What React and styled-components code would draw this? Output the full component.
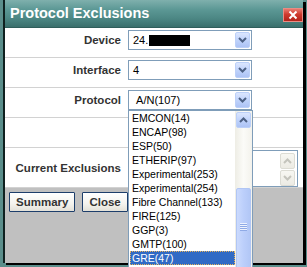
import styled, { createGlobalStyle } from 'styled-components'

const Global = createGlobalStyle`
  html, body {
    margin: 0;
    padding: 0;
    width: 307px;
    height: 267px;
    overflow: hidden;
    background: #5b8e8b;
  }
  body {
    font-family: 'Liberation Sans', Arial, sans-serif;
  }
  * { box-sizing: border-box; }
`

const Window = styled.div`
  position: relative;
  margin-left: 3px;
  width: 300px;
  height: 263px;
  display: flex;
  flex-direction: column;
  border-left: 2px solid #0f2120;
  box-shadow: 3px 2px 0 #000;
`

const TitleBar = styled.div`
  height: 28px;
  display: flex;
  align-items: flex-start;
  justify-content: space-between;
  padding-left: 5px;
  background: linear-gradient(#7fb0ad 0%, #5c9895 35%, #4b8683 70%, #3a6f6c 100%);
  border-bottom: 1px solid #2f5e5b;
`

const Title = styled.div`
  margin-top: 5px;
  color: #fff;
  font-weight: bold;
  font-size: 14.5px;
  line-height: 16px;
`

const CloseBox = styled.div`
  margin-top: 8px;
  width: 20px;
  height: 14px;
  display: flex;
  align-items: center;
  justify-content: center;
  background: linear-gradient(#e87a6f, #cf3a2e 45%, #b2221a);
  border: 1px solid #e98c84;
`

const Body = styled.div`
  background: #fff;
  display: flex;
  flex-direction: column;
`

const Row = styled.div`
  display: grid;
  grid-template-columns: 116px 124px;
  column-gap: 7px;
  align-items: ${p => (p.$center ? 'center' : 'start')};
  height: ${p => p.$h}px;
  padding-top: ${p => p.$pt}px;
  border-bottom: 1px solid #d2d2d2;
`

const Label = styled.div`
  text-align: right;
  font-weight: bold;
  font-size: 11.5px;
  line-height: 20px;
  color: #333;
`

const SelectWrap = styled.div`
  position: relative;
  width: 124px;
`

const SelectBox = styled.div`
  height: 20px;
  display: flex;
  align-items: center;
  justify-content: space-between;
  border: 1px solid #7f9db9;
  background: #fff;
  padding: 0 1px 0 4px;
  font-size: 11px;
  color: #000;
`

const Value = styled.span`
  display: flex;
  align-items: center;
`

const Redacted = styled.span`
  display: inline-block;
  width: 41px;
  height: 11px;
  background: #000;
  margin-left: 1px;
`

const ArrowBtn = styled.div`
  width: 15px;
  height: 16px;
  display: flex;
  align-items: center;
  justify-content: center;
  border: 1px solid ${p => (p.$disabled ? '#dcdcd4' : '#bcd0f8')};
  border-radius: 2px;
  background: ${p =>
    p.$disabled
      ? 'linear-gradient(#f7f7f2, #ecebe4)'
      : 'linear-gradient(#dbe6fe, #bcd0fa 60%, #adc3f5)'};
`

const DropList = styled.div`
  position: absolute;
  top: 100%;
  left: 0;
  width: 125px;
  height: 170px;
  display: flex;
  border: 1px solid #7f9db9;
  background: #fff;
  z-index: 5;
`

const Items = styled.div`
  flex: 1;
  padding-left: 1px;
`

const Item = styled.div`
  height: 14px;
  line-height: 14px;
  padding-left: 2px;
  font-size: 10.5px;
  color: ${p => (p.$active ? '#fff' : '#000')};
  background: ${p => (p.$active ? '#316ac5' : 'transparent')};
  outline: ${p => (p.$active ? '1px dotted #e9b25b' : 'none')};
  outline-offset: -1px;
  white-space: nowrap;
`

const ScrollBar = styled.div`
  width: 17px;
  display: flex;
  flex-direction: column;
  align-items: center;
  padding-top: 1px;
  background: linear-gradient(90deg, #eeede5, #fbfbf8 50%, #f3f2ec);
`

const Thumb = styled.div`
  margin-top: 60px;
  width: 15px;
  flex: 1;
  display: flex;
  flex-direction: column;
  align-items: center;
  padding-top: 34px;
  gap: 1px;
  border: 1px solid #b1c6f4;
  border-radius: 2px;
  background: linear-gradient(90deg, #cbdafd, #bccffb 50%, #b2c7f6);
`

const Grip = styled.div`
  width: 7px;
  height: 1px;
  background: #eef3fe;
  box-shadow: 0 1px 0 #8faae6;
`

const ListBox = styled.div`
  width: 170px;
  height: 37px;
  display: flex;
  justify-content: flex-end;
  border: 1px solid #7f9db9;
  background: #fff;
  padding: 2px 2px 0 0;
`

const DisabledScroll = styled.div`
  display: flex;
  flex-direction: column;
  gap: 1px;
`

const Footer = styled.div`
  flex: 1;
  background: #c0c0c0;
  display: flex;
  align-items: flex-start;
  gap: 7px;
  padding: 4px 0 0 4px;
`

const Button = styled.button`
  height: 20px;
  padding: 0 6px;
  border: 1px solid #1d3e6b;
  border-radius: 1px;
  background: linear-gradient(#ffffff, #f4f3ee 60%, #e3e1d8);
  font-family: 'Liberation Sans', Arial, sans-serif;
  font-weight: bold;
  font-size: 11.5px;
  color: #333;
`

const Chevron = ({ up, color = '#4d6185' }) => (
  <svg width="9" height="6" viewBox="0 0 9 6">
    <path
      d={up ? 'M1 5 L4.5 1.5 L8 5' : 'M1 1 L4.5 4.5 L8 1'}
      fill="none"
      stroke={color}
      strokeWidth="2"
    />
  </svg>
)

const protocols = [
  'EMCON(14)',
  'ENCAP(98)',
  'ESP(50)',
  'ETHERIP(97)',
  'Experimental(253)',
  'Experimental(254)',
  'Fibre Channel(133)',
  'FIRE(125)',
  'GGP(3)',
  'GMTP(100)',
  'GRE(47)',
]

function Select({ children, open }) {
  return (
    <SelectWrap>
      <SelectBox>
        <Value>{children}</Value>
        <ArrowBtn>
          <Chevron />
        </ArrowBtn>
      </SelectBox>
      {open && (
        <DropList>
          <Items>
            {protocols.map(p => (
              <Item key={p} $active={p === 'GRE(47)'}>
                {p}
              </Item>
            ))}
          </Items>
          <ScrollBar>
            <ArrowBtn>
              <Chevron up />
            </ArrowBtn>
            <Thumb>
              <Grip />
              <Grip />
              <Grip />
              <Grip />
            </Thumb>
          </ScrollBar>
        </DropList>
      )}
    </SelectWrap>
  )
}

export default function App() {
  return (
    <>
      <Global />
      <Window>
        <TitleBar>
          <Title>Protocol Exclusions</Title>
          <CloseBox>
            <svg width="10" height="10" viewBox="0 0 10 10">
              <path d="M1.5 1.5 L8.5 8.5 M8.5 1.5 L1.5 8.5" stroke="#fff" strokeWidth="2" />
            </svg>
          </CloseBox>
        </TitleBar>
        <Body>
          <Row $h={30} $pt={2}>
            <Label>Device</Label>
            <Select>
              24.<Redacted />
            </Select>
          </Row>
          <Row $h={30} $pt={2}>
            <Label>Interface</Label>
            <Select>4</Select>
          </Row>
          <Row $h={30} $pt={2}>
            <Label>Protocol</Label>
            <Select open>&nbsp;A/N(107)</Select>
          </Row>
          <Row $h={30} $pt={2} />
          <Row $h={40} $pt={1} $center>
            <Label>Current Exclusions</Label>
            <ListBox>
              <DisabledScroll>
                <ArrowBtn $disabled>
                  <Chevron up color="#c4c4bc" />
                </ArrowBtn>
                <ArrowBtn $disabled>
                  <Chevron color="#c4c4bc" />
                </ArrowBtn>
              </DisabledScroll>
            </ListBox>
          </Row>
        </Body>
        <Footer>
          <Button>Summary</Button>
          <Button>Close</Button>
        </Footer>
      </Window>
    </>
  )
}
